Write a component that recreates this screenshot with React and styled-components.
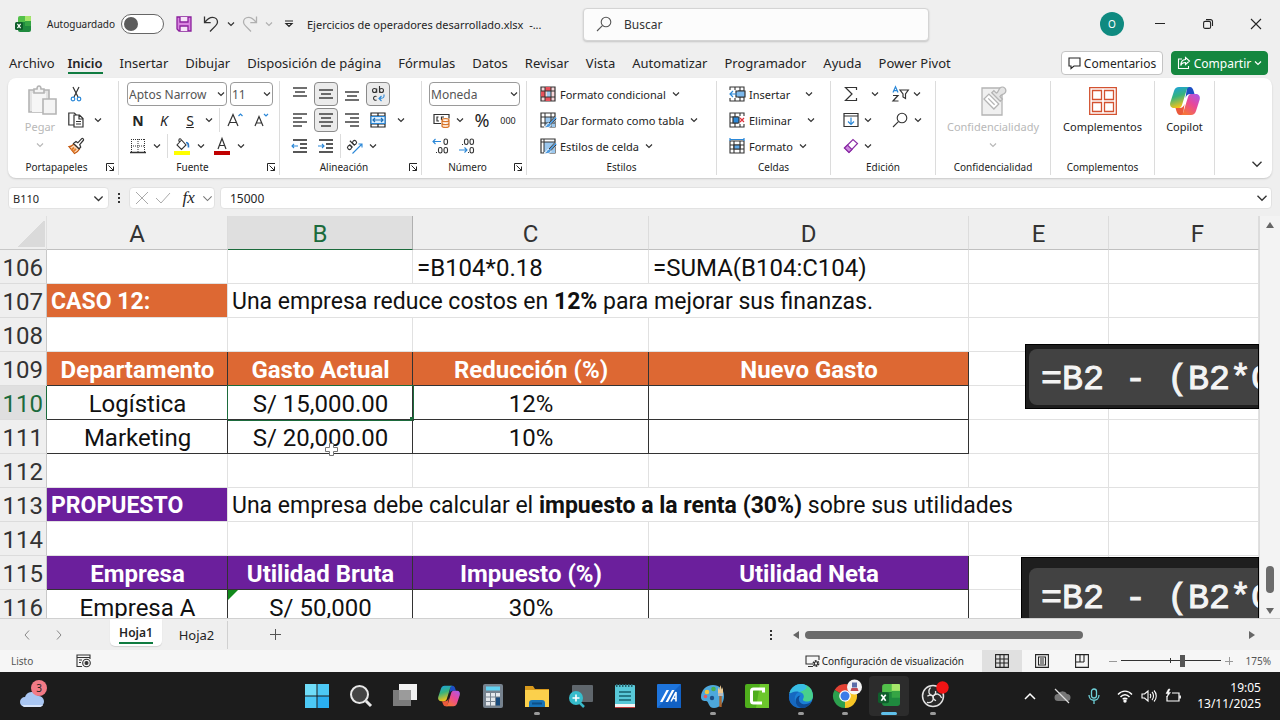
import React, { useState } from 'react';
import styled, { createGlobalStyle, css } from 'styled-components';

const ui = `'Noto Sans', 'Open Sans', sans-serif`;
const green = '#107c41';

const GlobalStyle = createGlobalStyle`
    * { box-sizing: border-box; }
    body {
        margin: 0;
        font-family: ${ui};
        font-size: 12px;
        color: #242424;
        background: #efefef;
    }
    button, input, select {
        font: inherit;
        color: inherit;
    }
    button {
        border: none;
        background: none;
        padding: 0;
    }
    svg {
        display: block;
        flex: none;
        overflow: visible;
    }
`

const Page = styled.div`
    display: flex;
    flex-direction: column;
    height: 100vh;
    overflow: hidden;
`

/* title bar */

const TitleBar = styled.header`
    display: flex;
    align-items: center;
    height: 48px;
    flex: none;
`

const QuickAccess = styled.div`
    display: flex;
    align-items: center;
    flex: 0 0 583px;
    padding-left: 15px;
    font-size: 11px;
`

const AutoSave = styled.label`
    display: flex;
    align-items: center;
    justify-content: space-between;
    width: 117px;
    margin: 0 9px 0 16px;
    font-size: 10px;
    white-space: nowrap;
`

const Toggle = styled.input`
    appearance: none;
    width: 43px;
    height: 20px;
    margin: 0;
    flex: none;
    padding: 2px;
    border: 1px solid #666;
    border-radius: 10px;
    background: #fff;
    &::before {
        content: '';
        display: block;
        width: 14px;
        height: 14px;
        border-radius: 50%;
        background: #5c5c5c;
    }
    &:checked::before {
        margin-left: auto;
    }
`

const FileName = styled.span`
    margin-left: 2px;
    white-space: pre;
`

const Search = styled.label`
    display: flex;
    align-items: center;
    gap: 12px;
    flex: 0 1 346px;
    height: 33px;
    padding: 0 12px;
    background: #fcfcfc;
    border: 1px solid #d4d4d4;
    border-radius: 4px;
    box-shadow: 0 1px 2px rgba(0, 0, 0, 0.18);
    input {
        flex: 1;
        min-width: 0;
        border: none;
        outline: none;
        background: none;
        font-size: 12px;
        padding: 0;
    }
    input::placeholder {
        color: #333;
    }
`

const WindowButtons = styled.div`
    display: flex;
    align-items: center;
    margin-left: auto;
`

const WindowButton = styled.button`
    display: flex;
    align-items: center;
    justify-content: center;
    width: 48px;
    height: 32px;
`

const Avatar = styled.button`
    width: 24px;
    height: 24px;
    margin-right: 12px;
    border-radius: 50%;
    background: #0f8a80;
    color: #fff;
    font-size: 10px;
`

/* ribbon */

const TabBar = styled.nav`
    display: flex;
    align-items: center;
    height: 30px;
    flex: none;
    padding: 0 12px 0 9px;
`

const TabList = styled.div`
    display: flex;
    gap: 17px;
    flex: 1;
`

const Tab = styled.button`
    height: 22px;
    padding-top: 2px;
    font-size: 13px;
    line-height: 18px;
    white-space: nowrap;
    border-bottom: 2px solid transparent;
    ${p => p.$first && css`
        margin-right: -4px;
    `}
    ${p => p.$active && css`
        font-weight: 600;
        border-bottom-color: ${green};
    `}
`

const TabAction = styled.button`
    display: flex;
    align-items: center;
    justify-content: center;
    gap: 3px;
    height: 24px;
    width: ${p => p.$width}px;
    margin-left: 8px;
    border-radius: 4px;
    font-size: 12px;
    border: 1px solid ${p => p.$primary ? '#15873f' : '#c4c4c4'};
    background: ${p => p.$primary ? '#15873f' : '#fff'};
    color: ${p => p.$primary ? '#fff' : '#242424'};
`

const Ribbon = styled.section`
    display: flex;
    flex: none;
    height: 100px;
    margin: 0 8px;
    padding: 3px 0;
    background: #fff;
    border-radius: 8px;
    box-shadow: 0 1px 2px rgba(0, 0, 0, 0.16);
`

const Group = styled.div`
    display: flex;
    flex-direction: column;
    flex: 0 0 ${p => p.$width}px;
    border-right: 1px solid #dcdcdc;
`

const GroupBody = styled.div`
    display: flex;
    height: 78px;
    padding-left: ${p => p.$pad || 0}px;
    justify-content: ${p => p.$center ? 'center' : 'flex-start'};
`

const GroupLabel = styled.div`
    display: flex;
    align-items: center;
    height: 16px;
    font-size: 10px;
    span {
        flex: 1;
        text-align: center;
    }
    button {
        margin-right: 3px;
    }
`

const Rows = styled.div`
    display: flex;
    flex-direction: column;
`

const Row = styled.div`
    display: flex;
    align-items: center;
    height: 26px;
    gap: ${p => p.$gap || 0}px;
`

const Tool = styled.button`
    display: flex;
    align-items: center;
    justify-content: center;
    width: ${p => p.$width || 24}px;
    height: 24px;
    flex: none;
    font-size: ${p => p.$size || 14}px;
    ${p => p.$on && css`
        background: #ebebeb;
        border: 1px solid #8a8a8a;
        border-radius: 4px;
    `}
`

const Divider = styled.span`
    width: 1px;
    height: 24px;
    margin: 0 ${p => p.$margin || 0}px;
    background: ${p => p.$clear ? 'transparent' : '#dcdcdc'};
`

const BigTool = styled.button`
    display: flex;
    flex-direction: column;
    align-items: center;
    width: ${p => p.$width}px;
    padding-top: 4px;
    white-space: nowrap;
    color: ${p => p.$disabled ? '#b8b8b8' : '#242424'};
    span {
        margin: 1px 0 5px;
        font-size: 11px;
        line-height: 18px;
    }
`

const TextTool = styled.button`
    display: flex;
    align-items: center;
    gap: 4px;
    height: 24px;
    font-size: 11px;
    white-space: nowrap;
    span {
        min-width: ${p => p.$textWidth || 0}px;
        text-align: left;
        margin-right: 2px;
    }
`

const Picker = styled.span`
    display: flex;
    align-items: center;
    width: ${p => p.$width}px;
    height: 24px;
    margin-right: 3px;
    padding-right: 1px;
    background: #fff;
    border: 1px solid #9a9a9a;
    border-radius: 4px;
    select {
        appearance: none;
        flex: 1;
        min-width: 0;
        border: none;
        outline: none;
        background: none;
        padding: 0 0 0 1px;
        font-size: 12px;
        color: #555;
    }
`

const Collapse = styled.button`
    align-self: flex-end;
    margin: 0 9px 5px auto;
`

/* formula bar */

const FormulaBar = styled.div`
    display: flex;
    align-items: center;
    flex: none;
    height: 22px;
    margin: 9px 8px 7px;
    font-size: 11px;
`

const NameBox = styled.label`
    display: flex;
    align-items: center;
    width: 101px;
    height: 22px;
    padding: 0 4px;
    background: #fff;
    border: 1px solid #e2e2e2;
    border-radius: 4px;
    input {
        flex: 1;
        min-width: 0;
        border: none;
        outline: none;
        padding: 0;
    }
`

const FormulaButtons = styled.div`
    display: flex;
    align-items: center;
    justify-content: space-between;
    width: 86px;
    height: 22px;
    padding: 0 1px 0 6px;
    margin-right: 5px;
    background: #fff;
    border: 1px solid #e2e2e2;
    border-radius: 4px;
`

const Fx = styled.button`
    font-family: 'Liberation Serif', serif;
    font-style: italic;
    font-size: 17px;
    line-height: 18px;
    padding-left: 4px;
`

const FormulaInput = styled.label`
    display: flex;
    align-items: center;
    flex: 1;
    height: 22px;
    padding: 0 3px 0 9px;
    background: #fff;
    border: 1px solid #e2e2e2;
    border-radius: 4px;
    font-size: 12px;
    input {
        flex: 1;
        border: none;
        outline: none;
        padding: 0;
    }
`

const Dots = styled.span`
    display: flex;
    flex-direction: column;
    align-items: center;
    gap: 2px;
    width: 20px;
    margin: ${p => p.$end ? '0 11px 0 auto' : 0};
    i {
        width: 2px;
        height: 2px;
        background: #333;
    }
`

/* sheet */

const SheetArea = styled.main`
    display: flex;
    flex: 1;
    min-height: 0;
    border-bottom: 1px solid #d0d0d0;
`

const Canvas = styled.div`
    position: relative;
    flex: 1;
    min-width: 0;
    overflow: hidden;
    background: #fff;
`

const Grid = styled.table`
    width: 100%;
    table-layout: fixed;
    border-collapse: separate;
    border-spacing: 0;
    font-family: Roboto, 'Liberation Sans', sans-serif;
    font-size: 24px;
    line-height: 30px;
    color: #111;
    td, th {
        height: 34px;
        padding: 2px 0 0;
        font-weight: 400;
        white-space: nowrap;
    }
`

const Corner = styled.td`
    background: linear-gradient(135deg, #efefef 50%, #dadada 50%) no-repeat 17px 5px / 28px 26px #efefef;
    border-right: 1px solid #e0e0e0;
    border-bottom: 1px solid #c8c8c8;
`

const ColHead = styled.th`
    background: ${p => p.$on ? '#dfdfdf' : '#efefef'};
    color: ${p => p.$on ? '#1c6b3c' : '#333'};
    border-right: 1px solid ${p => p.$on ? '#b0b0b0' : '#dcdcdc'};
    border-bottom: 1px solid ${p => p.$on ? '#1c6b3c' : '#c0c0c0'};
    && {
        padding-left: ${p => p.$shift || 0}px;
    }
`

const RowHead = styled.th`
    background: ${p => p.$on ? '#dfdfdf' : '#efefef'};
    color: ${p => p.$on ? '#1c6b3c' : '#333'};
    border-right: 1px solid ${p => p.$on ? '#1c6b3c' : '#c8c8c8'};
    border-bottom: 1px solid #dcdcdc;
    && {
        padding-right: 3px;
        text-align: right;
    }
`

const Cell = styled.td`
    position: relative;
    text-align: ${p => p.$center ? 'center' : 'left'};
    font-size: ${p => p.$caption ? 23 : 24}px;
    border-right: 1px solid ${p => p.$boxed ? '#333' : '#e1e1e1'};
    border-bottom: 1px solid ${p => p.$boxed ? '#333' : '#e1e1e1'};
    && {
        padding: 2px 3px 0 4px;
    }
    ${p => p.$fill && css`
        background: ${p.$fill};
        color: #fff;
        && {
            font-weight: 700;
        }
    `}
    ${p => p.$selected && css`
        outline: 1px solid #1c6b3c;
        &::after {
            content: '';
            position: absolute;
            right: -2px;
            bottom: -2px;
            width: 4px;
            height: 4px;
            background: #1c6b3c;
        }
    `}
    ${p => p.$flagged && css`
        &::before {
            content: '';
            position: absolute;
            left: 0;
            top: 0;
            border-top: 10px solid #128a1c;
            border-right: 10px solid transparent;
        }
    `}
`

const Snippet = styled.div`
    position: absolute;
    right: 0;
    top: ${p => p.$top}px;
    width: ${p => p.$width}px;
    height: 65px;
    padding: ${p => p.$pad};
    overflow: hidden;
    background: #1e1e1e;
    border: 1px solid #000;
    code {
        display: block;
        width: 400px;
        height: 56px;
        padding-left: 12px;
        border-radius: 8px;
        background: #424242;
        color: #f4f4f4;
        -webkit-text-stroke: 1px #f4f4f4;
        font-family: 'Liberation Mono', monospace;
        font-size: 35px;
        line-height: 62px;
        white-space: pre;
    }
`

const Pointer = styled.svg`
    position: absolute;
    left: 324px;
    top: 226px;
`

const VScroll = styled.div`
    display: flex;
    flex-direction: column;
    align-items: center;
    width: 21px;
    padding: 5px 0 3px;
    background: #f3f3f3;
    border-left: 1px solid #dcdcdc;
`

const VThumb = styled.span`
    width: 8px;
    height: 27px;
    margin: auto 0 14px;
    border-radius: 4px;
    background: #6b6b6b;
`

const SheetTabs = styled.nav`
    display: flex;
    align-items: center;
    flex: none;
    height: 31px;
    padding: 0 24px 0 11px;
    background: #efefef;
`

const SheetTab = styled.button`
    align-self: flex-start;
    width: ${p => p.$active ? 52 : 62}px;
    height: 28px;
    font-size: 13px;
    border-right: 1px solid #d0d0d0;
    span {
        padding-bottom: 1px;
    }
    ${p => p.$active ? css`
        margin: 0 4px 0 35px;
        height: 27px;
        background: #fff;
        border-right: none;
        border-radius: 0 0 5px 5px;
        font-weight: 600;
        font-size: 12px;
        box-shadow: 0 1px 1px rgba(0, 0, 0, 0.12);
        span {
            border-bottom: 2px solid ${green};
        }
    ` : css`
        margin-top: 2px;
    `}
`

const HScroll = styled.div`
    display: flex;
    align-items: center;
    width: 464px;
`

const HThumb = styled.span`
    width: 278px;
    height: 8px;
    margin: 0 auto 0 5px;
    border-radius: 4px;
    background: #6b6b6b;
`

/* status bar */

const StatusBar = styled.footer`
    display: flex;
    align-items: center;
    flex: none;
    height: 22px;
    padding: 0 9px 0 11px;
    font-size: 10px;
    background: #f6f6f6;
`

const Listo = styled.span`
    width: 65px;
    color: #555;
`

const DisplaySettings = styled.button`
    display: flex;
    align-items: center;
    gap: 2px;
    margin: 0 18px 0 auto;
`

const ViewButton = styled.button`
    display: flex;
    align-items: center;
    justify-content: center;
    width: 40px;
    height: 22px;
    background: ${p => p.$active ? '#e0e0e0' : 'none'};
`

const Zoom = styled.label`
    display: flex;
    align-items: center;
    gap: 4px;
    margin-left: 7px;
    color: #999;
    input {
        appearance: none;
        width: 100px;
        height: 12px;
        margin: 0;
        background:
            linear-gradient(#333, #333) no-repeat 49px 3px / 1px 5px,
            linear-gradient(#333, #333) no-repeat 0 5px / 100% 1px;
    }
    input::-webkit-slider-thumb {
        appearance: none;
        width: 5px;
        height: 12px;
        background: #555;
    }
`

const ZoomValue = styled.span`
    width: 38px;
    text-align: right;
    color: #555;
`

/* taskbar */

const Taskbar = styled.footer`
    display: flex;
    align-items: center;
    flex: none;
    height: 48px;
    padding: 0 19px 0 18px;
    background: #1c1c1c;
    color: #fff;
`

const Apps = styled.div`
    display: flex;
    flex: 1;
    gap: 4px;
    margin-left: 249px;
`

const AppButton = styled.button`
    display: flex;
    flex-direction: column;
    align-items: center;
    justify-content: space-between;
    width: 40px;
    height: 40px;
    padding: 8px 0 1px;
    border-radius: 4px;
    background: ${p => p.$active ? '#2c2c2c' : 'none'};
    i {
        width: ${p => p.$active ? 16 : 6}px;
        height: 3px;
        border-radius: 2px;
        background: ${p => p.$active ? '#5fc0ea' : p.$running ? '#9a9a9a' : 'transparent'};
    }
`

const Tray = styled.div`
    display: flex;
    align-items: center;
    button {
        display: flex;
        justify-content: center;
        width: 24px;
    }
    button:nth-child(-n + 3) {
        width: 32px;
    }
    button:nth-child(3) {
        margin-right: 3px;
    }
`

const Clock = styled.time`
    width: 76px;
    text-align: right;
    font-size: 12px;
    line-height: 16px;
`

const Svg = ({ w = 16, h = w, box, children, ...rest }) => (
    <svg width={w} height={h} viewBox={box || `0 0 ${w} ${h}`} fill="none" stroke="currentColor" aria-hidden="true" {...rest}>
        {children}
    </svg>
)

const Chevron = ({ size = 8, color = '#333', width = 1.2 }) => (
    <Svg w={size} box="0 0 8 8" stroke={color} strokeWidth={width}><path d="M1 2.5 4 5.5 7 2.5" /></Svg>
)

const Drop = ({ width = 16 }) => <Tool $width={width} aria-label="Más opciones"><Chevron /></Tool>

const Launcher = () => (
    <button aria-label="Abrir cuadro de diálogo">
        <Svg w={10} strokeWidth="1"><path d="M1.5 9V1.5H9M3.5 3.5l5 5M8.5 4.5v4h-4" /></Svg>
    </button>
)

const ExcelIcon = ({ size = 16 }) => (
    <Svg w={size} box="0 0 16 16" stroke="none">
        <path d="M5 0h10a1 1 0 0 1 1 1v5H3V2a2 2 0 0 1 2-2z" fill="#52c04a" />
        <path d="M10 0h5a1 1 0 0 1 1 1v4h-6z" fill="#a6e66a" />
        <path d="M3 6h13v8a2 2 0 0 1-2 2H5a2 2 0 0 1-2-2z" fill="#1f8a3e" />
        <path d="M10 5h6v5h-6z" fill="#35a544" />
        <rect y="6" width="8" height="8" rx="1.5" fill="#0f5f2c" />
        <path d="M2.4 7.8 5.6 12.2M5.6 7.8 2.4 12.2" stroke="#fff" strokeWidth="1.2" />
    </Svg>
)

const SaveIcon = () => (
    <Svg w={16} stroke="#8a1f9c" strokeWidth="1.3">
        <path d="M1 1h14v14H3l-2-2z" fill="#d884e0" />
        <path d="M4 1v5h8V1M4 15v-5h8v5" fill="#f6e4f8" />
    </Svg>
)

const UndoIcon = ({ flip, color }) => (
    <Svg w={16} h={18} stroke={color} strokeWidth="1.3">
        <path
            transform={flip ? 'matrix(-1 0 0 1 16 0)' : undefined}
            d="M1.500 1.500v6.200h6.200M1.700 7.500C4.500 3.800 6.700 2.300 9.500 2.300c3 0 5 2 5 4.600 0 1.800-1 3-2 4L7 16.500"
        />
    </Svg>
)

const Lens = ({ size = 16, color = '#333' }) => (
    <Svg w={size} box="0 0 16 16" stroke={color} strokeWidth="1.1"><circle cx="10" cy="6" r="4.8" /><path d="M6.4 9.6 1 15" /></Svg>
)

const Lines = ({ rows }) => (
    <Svg w={16} stroke="#222" strokeWidth="1.3">
        {rows.map(([x, y, len]) => <path key={y} d={`M${x} ${y}h${len}`} />)}
    </Svg>
)

const PasteIcon = () => (
    <Svg w={30} h={32} stroke="#b4b4b4" strokeWidth="1.6">
        <path d="M4 5h20v22H4z" fill="#e4e4e4" />
        <path d="M7 8h14v19H7z" fill="#f6f6f6" stroke="none" />
        <path d="M9 8V4h3c0-4 4-4 4 0h3v4z" fill="#f4f4f4" />
        <path d="M18 14h13v15H18z" fill="#f4f4f4" />
    </Svg>
)

const CutIcon = () => (
    <Svg w={12} h={16} stroke="#333" strokeWidth="1.2">
        <path d="M3 1l5 10M9 1 4 11" />
        <circle cx="3" cy="13" r="1.8" stroke="#2b88d8" /><circle cx="9" cy="13" r="1.8" stroke="#2b88d8" />
    </Svg>
)

const CopyIcon = () => (
    <Svg w={16} stroke="#333" strokeWidth="1.2">
        <path d="M6 13H.8V1h5.500l2 2" /><path d="M6 3h5.500L15 6.500V15H6zM11 3v4h4M8 9.500h5M8 12h5" />
    </Svg>
)

const BrushIcon = () => (
    <Svg w={16} strokeWidth="1.2">
        <path d="M1 8.500c2 0 3.500-1 5-2.500l5.500 5c-1 2-3 3.500-5 4.500z" fill="#fbd9b8" stroke="#c55a11" />
        <path d="M3.500 12 6 9.500M5 13.800l3-3" stroke="#e07a28" strokeWidth="1.800" />
        <path d="M5.500 5.500 8 3.500l1.800 1.300 3.700-4a1.200 1.200 0 0 1 1.700 1.700L11.700 6.500l1 2.500-1.700 1.800z" stroke="#333" fill="#fff" />
    </Svg>
)

const BordersIcon = () => (
    <Svg w={16} stroke="#333">
        <path d="M1 1.500h14M1 8h14M1.500 1v13M8 1v13M14.500 1v13" strokeDasharray="1 1" /><path d="M0 14.500h16" strokeWidth="1.500" />
    </Svg>
)

const FillIcon = () => (
    <Svg w={18} h={18} stroke="#333" strokeWidth="1.1">
        <path d="M8.500 3 4 8l4.500 4.500L13 8zM8.500 3c-2-3-3.500 0-2 2.300" /><path d="M13 5.500c2.500 0 2.500 2 2.500 5" stroke="#2b78c8" strokeWidth="1.600" />
        <path d="M1 16h16" stroke="#ffff00" strokeWidth="4" />
    </Svg>
)

const FontColorIcon = () => (
    <Svg w={16} h={18} stroke="#333" strokeWidth="1.200"><path d="M4 12 8 1.500l4 10.500M5.300 8.500h5.400" /><path d="M0 16h16" stroke="#c00000" strokeWidth="4" /></Svg>
)

const GrowFont = ({ down }) => (
    <Svg w={16} h={16} stroke="#333" strokeWidth="1.200">
        {down ? <path d="M1 14 5 4.500 9 14M2.400 11h5.200" /> : <path d="M1 14 6 2.500 11 14M2.800 10.500h6.400" />}
        <path d={down ? 'M10 2l2 2 2-2' : 'M11.500 4l2-2 2 2'} stroke="#2b88d8" />
    </Svg>
)

const WrapIcon = () => (
    <Svg w={16} h={18} stroke="#333" strokeWidth="1.1">
        <circle cx="4.500" cy="5.500" r="2" /><path d="M6.700 3.500v4.300M9.500 1v6.800" /><circle cx="11.500" cy="5.500" r="2" />
        <path d="M6.500 11.500a2 2 0 1 0 0 3.500" /><path d="M14 9.500v1.500c0 2-1 2.500-5 2.500m2.500-2.500L9 13.500 11.500 16" stroke="#2b88d8" />
    </Svg>
)

const MergeIcon = () => (
    <Svg w={16} stroke="#222" strokeWidth="1.2">
        <path d="M1 1h14v14H1zM1 4h14M1 12h14M8 1v3M8 12v3" /><path d="M1 4.500h14v7H1z" fill="#dcefff" stroke="#2b88d8" />
        <path d="M3 8h10M5 6 3 8l2 2M11 6l2 2-2 2" stroke="#1f6fb5" />
    </Svg>
)

const IndentIcon = ({ right }) => (
    <Svg w={16} stroke="#222" strokeWidth="1.3">
        <path d="M1 2h14M8 6h7M8 10h7M1 14h14" />
        <path d={right ? 'M0 8h6M4 6l2 2-2 2' : 'M6 8H0M2 6 0 8l2 2'} stroke="#2b88d8" strokeWidth="1.1" />
    </Svg>
)

const OrientIcon = () => (
    <Svg w={18} h={16} stroke="#333" strokeWidth="1.1">
        <g transform="rotate(-45 6 7)">
            <circle cx="2.500" cy="7" r="2" /><path d="M4.700 4.800V9.200M7.500 2.500v6.700" /><circle cx="9.600" cy="7" r="2" />
        </g>
        <path d="M6.500 15.500 16 6M12.500 6H16v3.500" stroke="#2b88d8" />
    </Svg>
)

const CurrencyIcon = () => (
    <Svg w={17} h={16} stroke="#333" strokeWidth="1.2">
        <path d="M8 11.500H1v-9h15v4" /><path d="M5.500 5H4v4h2M11 5H8.500v3" />
        <path d="M9 8c0-2 7-2 7 0v6c0 2-7 2-7 0zM9 8c0 2 7 2 7 0M9 11c0 2 7 2 7 0" stroke="#d9762b" fill="#fbe0c8" />
    </Svg>
)

const DecimalIcon = ({ more }) => (
    <Svg w={18} h={18} stroke="#333" strokeWidth="1.100">
        <rect x={more ? 6.500 : 12} y="2" width="3.500" height="5.500" rx="1.700" />
        {more && <rect x="12" y="2" width="3.500" height="5.500" rx="1.700" />}
        <rect x="12" y="10.500" width="3.500" height="5.500" rx="1.700" />
        {!more && <rect x="6.500" y="10.500" width="3.500" height="5.500" rx="1.700" />}
        <path d={more ? 'M4 7.500h1M10 15.500h1' : 'M4 15.500h1'} />
        <path d={more ? 'M1 13h8M6.500 10.500 9 13l-2.500 2.500' : 'M9 4.500H1M3.500 2 1 4.500 3.500 7'} stroke="#2b88d8" />
    </Svg>
)

const TableIcon = ({ kind }) => (
    <Svg w={16} strokeWidth="1.2" stroke="#333">
        <path d="M1 1h14v14H1z" fill={kind === 'cond' ? '#f9d7da' : '#fff'} />
        {kind === 'cond' && <path d="M5 1h6v4H5zM1 5h4v6H1zM5 11h6v4H5z" fill="#e8505b" stroke="none" />}
        {kind === 'cond' && <path d="M7 5h4v6H7z" fill="#9cc8ee" stroke="none" />}
        {kind === 'table' && <path d="M5 5h10v10H5z" fill="#9cc8ee" stroke="none" />}
        {kind === 'style' && <path d="M4 4h11v11H4z" fill="#9cc8ee" stroke="none" />}
        <path d={kind === 'style' ? 'M1 4h14M4 1v14' : 'M1 5h14M1 11h14M5 1v14M11 1v14'} strokeWidth="1" />
        {kind !== 'cond' && <path d="M16 4 9 11c-2.500 0-2 3.500-5 4 4 1.500 7 0 7-2.500l6-6z" fill="#4f9be0" stroke="#fff" strokeWidth="1" />}
        {kind !== 'cond' && <path d="M15.500 4 9 11M16 7l-5 5.500" strokeWidth="1" />}
    </Svg>
)

const CellsIcon = ({ kind }) => (
    <Svg w={16} strokeWidth="1.2" stroke="#333">
        <path d={kind === 'format' ? 'M1 3h14v12H1zM1 7h14M1 11h14M5 3v12M11 3v12' : 'M1 1h14v14H1zM1 5h14M1 11h14M6 1v4M11 1v4M6 11v4M11 11v4'} strokeWidth="1.100" />
        {kind === 'insert' && <><path d="M0 4h9v8H0z" fill="#fff" stroke="none" /><path d="M7 5h9v6H7z" fill="#7db9ec" /><path d="M8 8H1M4 5 1 8l3 3" stroke="#2b88d8" /></>}
        {kind === 'delete' && <><path d="M9 4h7v8H9z" fill="#fff" stroke="none" /><path d="M4 5h6v6H4z" fill="#2b88d8" /><path d="M11 6l4 4M15 6l-4 4" stroke="#e0303a" /></>}
        {kind === 'format' && <><path d="M5 7h6v4H5z" fill="#5fa8e8" /><path d="M1 0v3M15 0v3M1 1.500h14" stroke="#2b88d8" /></>}
    </Svg>
)

const SumIcon = () => <Svg w={14} h={16} stroke="#333" strokeWidth="1.2"><path d="M12.500 4V1.500H1.500L8 8l-6.500 6.500h11V12" /></Svg>

const FillDown = () => (
    <Svg w={16} stroke="#333" strokeWidth="1.2"><path d="M1 1.500h14v13H1zM1 4h14" /><path d="M8 5.500v7M5 9.500l3 3 3-3" stroke="#2b88d8" /></Svg>
)

const EraserIcon = () => (
    <Svg w={16} stroke="#8a2da5" strokeWidth="1.2"><path d="M1.500 10 10 1.500l4.500 4L6 14.500z" fill="#fff" /><path d="M1.500 10l3-3L9 11.500l-3 3z" fill="#d08ae0" /></Svg>
)

const SortIcon = () => (
    <Svg w={17} h={16} stroke="#333" strokeWidth="1.2">
        <path d="M1 6.500 3.500.8 6 6.500M2 4.700h3" stroke="#2b88d8" /><path d="M1 9.500h5L1 15h5.500" /><path d="M8 4h8.300L13.500 8v4.500L11 11V8z" />
    </Svg>
)

const SensitivityIcon = () => (
    <Svg w={30} h={32} stroke="#b4b4b4" strokeWidth="1.3">
        <path d="M4 3h20v27H4z" fill="#f0f0f0" />
        <g transform="rotate(45 18 12)">
            <path d="M11 15h14v7H11z" fill="#fff" /><path d="M13.500 18.500h9" />
            <path d="M12 12h12V9h-3.500c-1-2 1-4 1-6a3.500 3.500 0 0 0-7 0c0 2 2 4 1 6H12z" fill="#e4e4e4" />
        </g>
    </Svg>
)

const AddinsIcon = () => (
    <Svg w={28} h={32} stroke="#d35230" strokeWidth="1.3">
        <path d="M.7 2.700h26.600v26.600H.7z" /><path d="M3.500 5.500h9v9h-9zM15.500 5.500h9v9h-9zM3.500 17.500h9v9h-9zM15.500 17.500h9v9h-9z" />
    </Svg>
)

const CopilotIcon = ({ id, size, h = size }) => (
    <Svg w={size} h={h} box="0 0 30 28" stroke="none">
        <defs>
            <linearGradient id={`${id}a`} x1="0" y1="0" x2="0.300" y2="1"><stop stopColor="#1aa0e8" /><stop offset=".5" stopColor="#36b37e" /><stop offset="1" stopColor="#f2c21a" /></linearGradient>
            <linearGradient id={`${id}b`} x1="1" y1="0" x2="0.300" y2="1"><stop stopColor="#a55bf0" /><stop offset=".5" stopColor="#e8489a" /><stop offset="1" stopColor="#f7743a" /></linearGradient>
        </defs>
        <path d="M17 0h3c2 0 3 2 3.600 4l.9 3h-4c-3 0-4 1.500-5 4z" fill="#1c4fc4" />
        <path d="M13 28h-3c-2 0-3-2-3.600-4l-.9-3h4c3 0 4-1.500 5-4z" fill="#ea5a3c" />
        <path d="M9 0h10c-2 1-2.500 3-3 5l-4 13c-.8 2.500-2 3-4 3H4c-3 0-4.500-2.500-3.700-5.500L4 4c.8-2.500 2.500-4 5-4z" fill={`url(#${id}a)`} />
        <path d="M21 28H11c2-1 2.500-3 3-5l4-13c.8-2.500 2-3 4-3h4c3 0 4.500 2.500 3.700 5.500L26 24c-.8 2.500-2.500 4-5 4z" fill={`url(#${id}b)`} />
    </Svg>
)

const ShareIcon = () => <Svg w={14} h={14} stroke="#fff" strokeWidth="1.100"><path d="M5 3H1.500v9.500h10V10M8.500 1.500l4 3.500-4 3.500v-2C6 6.500 4.500 7.500 3.800 9.500c0-3.500 1.700-5.800 4.700-6z" /></Svg>

const CommentIcon = () => <Svg w={13} h={14} strokeWidth="1.100"><path d="M1 2h11v8H6l-3 2.500V10H1z" /></Svg>

const MacroIcon = () => (
    <Svg w={16} h={14} stroke="#333" strokeWidth="1.100"><path d="M6 12.500H1V1h13v4M1 3.500h13M3 6h3M3 8.500h2" /><circle cx="10.500" cy="9" r="3.800" /><circle cx="10.500" cy="9" r="1.500" fill="#333" /></Svg>
)

const DisplayIcon = () => (
    <Svg w={15} h={14} stroke="#333" strokeWidth="1.100"><path d="M8 10H1V2h13v4M3 12.500h5" /><circle cx="11" cy="9.500" r="2.500" strokeWidth="2" strokeDasharray="1.600 1" /><circle cx="11" cy="9.500" r="1.700" /></Svg>
)

const Arrow = ({ d }) => <Svg w={8} stroke="none"><path d={d} fill="#666" /></Svg>

const taskIcons = {
    windows: <Svg w={24} stroke="none"><path d="M0 0h11.500v11.500H0z" fill="#6fdcf8" /><path d="M12.500 0H24v11.500H12.500zM0 12.500h11.500V24H0z" fill="#4cc8f5" /><path d="M12.500 12.500H24V24H12.500z" fill="#2aaef0" /></Svg>,
    search: <Svg w={24} stroke="#e8e8e8"><circle cx="10.500" cy="10.500" r="8.500" fill="#444" strokeWidth="2" /><path d="M17 17l5 5" strokeWidth="3" /></Svg>,
    tasks: <Svg w={24} stroke="none"><path d="M6 0h18v16H6z" fill="#f2f2f2" /><path d="M0 6h18v16H0z" fill="#8c8c8c" fillOpacity=".85" /></Svg>,
    copilot: <CopilotIcon id="tb" size={22} h={24} />,
    calc: (
        <Svg w={24} stroke="none">
            <rect x="2" width="20" height="24" rx="2" fill="#76828e" /><path d="M5 2.500h14v4H5z" fill="#62d2f2" />
            <path d="M5 9h4v3.500H5zM10 9h4v3.500h-4zM15 9h4v3.500h-4zM5 13.500h4V17H5zM10 13.500h4V17h-4zM5 18h4v3.500H5zM10 18h4v3.500h-4z" fill="#e4e8ec" /><path d="M15 13.500h4v8h-4z" fill="#174a7c" />
        </Svg>
    ),
    folder: <Svg w={24} stroke="none"><path d="M0 2h8l2 3h14v5H0z" fill="#d99a1c" /><path d="M0 6h24v17H0z" fill="#fbd04c" /><path d="M4 23v-4a3 3 0 0 1 3-3h10a3 3 0 0 1 3 3v4z" fill="#1773b8" /><path d="M7 19.500h10" stroke="#0d4f86" strokeWidth="2" /></Svg>,
    magnify: <Svg w={24} stroke="none"><rect x="3" y="1" width="21" height="17" rx="1" fill="#5f666c" /><path d="M11 19l4 4" stroke="#3ab8c8" strokeWidth="2.500" /><circle cx="7" cy="14" r="7" fill="#36bccb" /><path d="M7 10.500v7M3.500 14h7" stroke="#fff" strokeWidth="1.600" /></Svg>,
    notes: <Svg w={24} stroke="none"><rect x="2" y="1" width="20" height="22" rx="1" fill="#58c8d8" /><path d="M2 21.500h20" stroke="#f4f6f6" strokeWidth="3" /><path d="M2 23.500h20" stroke="#c23c3c" strokeWidth="1" /><path d="M6 8h12M6 12h12M6 16h12" stroke="#14606e" strokeWidth="1.300" /><path d="M3 1.500h18" stroke="#26616c" strokeWidth="3" strokeDasharray="1.500 1.500" /></Svg>,
    monitor: <Svg w={24} stroke="none"><rect width="24" height="24" rx="1" fill="#1d74dc" /><path d="M0 24 24 0v24z" fill="#1261c4" /><path d="M3 18 9.500 6H12L5.500 18zM8.500 18 15 6h2.500L11 18z" fill="#fff" /><path d="M14 17.500 19 8v9.500M16.500 14.500H19" stroke="#fff" strokeWidth="1.600" /></Svg>,
    paint: (
        <Svg w={24} stroke="none">
            <path d="M12 1C5 1 0 6.500 0 13c0 4 3 4 5 4 3 0 2 7 8 7s10-5 10-12S18 1 12 1z" fill="#4da8dc" />
            <circle cx="6" cy="8" r="2.300" fill="#f5c63c" /><circle cx="12.500" cy="5" r="2.300" fill="#4caf50" /><circle cx="4.500" cy="12.500" r="1.800" fill="#e85a5a" /><circle cx="11" cy="14" r="2.200" fill="#1c4f86" />
            <path d="M19.500 8v15" stroke="#a8622c" strokeWidth="2.400" /><path d="M17 9h5V3l-1.200 3L19.500 1l-1.300 5L17 3z" fill="#ecc890" /><path d="M17 9h5v3h-5z" fill="#b8bcc0" />
        </Svg>
    ),
    camtasia: <Svg w={24} stroke="none"><rect width="24" height="24" rx="2" fill="#4fae1c" /><path d="M15 0h9v24H11z" fill="#6cc62c" /><path d="M18.500 8.500V5H8.500a2 2 0 0 0-2 2v10a2 2 0 0 0 2 2H17" stroke="#fff" strokeWidth="3" /></Svg>,
    edge: (
        <Svg w={24} stroke="none">
            <circle cx="12" cy="12" r="12" fill="#1b7fd6" />
            <path d="M.5 9C3 2 10-1 16 .7 22 2.500 24 8 24 12c0 4-3 5.500-6 5.500-3.500 0-4.500-1.500-4-2.500 2-2.500.5-7-4.500-7C5 8 2 9 .5 9z" fill="#48d08c" />
            <path d="M.5 9C3 2 9-1 15 .5 19 1.500 18 5 15 6c-2 1.500-4 2-5.500 2C5 8 2 9 .5 9z" fill="#38bce4" />
            <path d="M10 8c-6 2-6 13 3 15.900C5 25-1 19 0 11.500 2 7.500 7 7 10 8z" fill="#1668c0" />
            <path d="M11.500 11.500c-3 2-2 8 3 8.700 3 .3 6-1 7.800-2.400C20 23 15 24.500 12 23.900 5 22 5 12 11.500 11.500z" fill="#0e4a94" />
        </Svg>
    ),
    chrome: (
        <Svg w={28} h={24} box="-2 0 28 24" stroke="none">
            <path d="M12 12 1.600 6A12 12 0 0 1 22.400 6z" fill="#e34133" /><path d="M12 12 1.600 6A12 12 0 0 0 12 24l5-9z" fill="#2da04e" /><path d="M12 12l10.400-6A12 12 0 0 1 12 24z" fill="#f7c526" />
            <circle cx="12" cy="12" r="5.800" fill="#fff" /><circle cx="12" cy="12" r="4.500" fill="#3c7be8" /><circle cx="21.500" cy="3" r="7.500" fill="#f4f4f4" /><path d="M18.500 4h6l1 3h-8z" fill="#c04a54" /><path d="M19-1.500h5v5h-5z" fill="#5c6ea8" />
        </Svg>
    ),
    excel: <ExcelIcon size={22} />,
    obs: (
        <Svg w={28} h={24} box="-1 0 28 24" stroke="#e4e4e4" strokeWidth="1.500">
            <circle cx="13" cy="12" r="10.500" fill="#2a2a2a" />
            {[0, 120, 240].map(a => <path key={a} transform={`rotate(${a} 13 12)`} d="M13 12c-4.500-1-5.500-5-2.500-8.500M13 12c2-1 3-3 2.500-5" strokeWidth="1.300" />)}
            <circle cx="22.500" cy="3.500" r="6.200" fill="#f01414" stroke="none" />
        </Svg>
    ),
}

const tabs = ['Archivo', 'Inicio', 'Insertar', 'Dibujar', 'Disposición de página', 'Fórmulas', 'Datos', 'Revisar', 'Vista', 'Automatizar', 'Programador', 'Ayuda', 'Power Pivot'];

const taskApps = [
    ['windows', 'Inicio'], ['search', 'Buscar'], ['tasks', 'Vista de tareas'], ['copilot', 'Copilot'], ['calc', 'Calculadora'],
    ['folder', 'Explorador', true], ['magnify', 'Lupa'], ['notes', 'Bloc de notas'], ['monitor', 'MyASUS'], ['paint', 'Paint', true],
    ['camtasia', 'Camtasia'], ['edge', 'Edge', true], ['chrome', 'Chrome', true], ['excel', 'Excel', true], ['obs', 'OBS', true],
];

const orange = '#dd6833';
const purple = '#6b1f9c';
const blank = [{}, {}, {}, {}, {}, {}];

const caption = (fill, title, span, text) => [{ text: title, fill, caption: true }, { span, text, caption: true }];
const headers = (fill, names) => [...names.map(text => ({ text, fill, center: true, boxed: true })), {}, {}];
const values = (a, b, c, extra) => [
    { text: a, center: true, boxed: true },
    { text: b, center: true, boxed: true, ...extra },
    { text: c, center: true, boxed: true },
    { boxed: true }, {}, {},
];

const rows = [
    [106, [{}, {}, { text: '=B104*0.18' }, { text: '=SUMA(B104:C104)' }, {}, {}]],
    [107, [...caption(orange, 'CASO 12:', 3, <>Una empresa reduce costos en <b>12%</b> para mejorar sus finanzas.</>), {}, {}]],
    [108, blank],
    [109, headers(orange, ['Departamento', 'Gasto Actual', 'Reducción (%)', 'Nuevo Gasto'])],
    [110, values('Logística', 'S/ 15,000.00', '12%', { selected: true })],
    [111, values('Marketing', 'S/ 20,000.00', '10%')],
    [112, blank],
    [113, [...caption(purple, 'PROPUESTO', 4, <>Una empresa debe calcular el <b>impuesto a la renta (30%)</b> sobre sus utilidades</>), {}]],
    [114, blank],
    [115, headers(purple, ['Empresa', 'Utilidad Bruta', 'Impuesto (%)', 'Utilidad Neta'])],
    [116, values('Empresa A', 'S/ 50,000', '30%', { flagged: true })],
];

const RibbonGroup = ({ label, width, pad, center, launcher, children }) => (
    <Group $width={width}>
        <GroupBody $pad={pad} $center={center}>{children}</GroupBody>
        <GroupLabel>
            <span>{label}</span>
            {launcher && <Launcher />}
        </GroupLabel>
    </Group>
)

const Select = ({ label, value, width }) => (
    <Picker $width={width}>
        <select aria-label={label} defaultValue={value}><option>{value}</option></select>
        <Chevron />
    </Picker>
)

const MenuTool = ({ icon, text, textWidth }) => (
    <Row>
        <TextTool $textWidth={textWidth}>{icon}<span>{text}</span><Chevron /></TextTool>
    </Row>
)

const HomeRibbon = () => (
    <Ribbon>
        <RibbonGroup label="Portapapeles" width={111} pad={4} launcher>
            <BigTool $width={56} $disabled><PasteIcon /><span>Pegar</span><Chevron color="#b8b8b8" /></BigTool>
            <Rows>
                <Row><Tool $width={16} aria-label="Cortar"><CutIcon /></Tool></Row>
                <Row><Tool $width={16} aria-label="Copiar"><CopyIcon /></Tool><Drop width={28} /></Row>
                <Row><Tool $width={16} aria-label="Copiar formato"><BrushIcon /></Tool></Row>
            </Rows>
        </RibbonGroup>
        <RibbonGroup label="Fuente" width={161} pad={8} launcher>
            <Rows>
                <Row><Select label="Fuente" value="Aptos Narrow" width={100} /><Select label="Tamaño" value="11" width={43} /></Row>
                <Row>
                    <Tool $width={22}><b>N</b></Tool><Tool $width={30}><i>K</i></Tool><Tool $width={22}><u>S</u></Tool><Drop />
                    <Divider $margin={2} />
                    <Tool $width={26} aria-label="Aumentar"><GrowFont /></Tool><Tool $width={28} aria-label="Disminuir"><GrowFont down /></Tool>
                </Row>
                <Row>
                    <Tool $width={22} aria-label="Bordes"><BordersIcon /></Tool><Drop />
                    <Divider $margin={2} />
                    <Tool $width={24} aria-label="Color de relleno"><FillIcon /></Tool><Drop width={14} />
                    <Tool $width={28} aria-label="Color de fuente"><FontColorIcon /></Tool><Drop width={10} />
                </Row>
            </Rows>
        </RibbonGroup>
        <RibbonGroup label="Alineación" width={142} pad={8} launcher>
            <Rows>
                <Row $gap={2}>
                    <Tool aria-label="Alinear arriba"><Lines rows={[[1, 2, 14], [3, 6, 10], [1, 10, 14]]} /></Tool>
                    <Tool $on aria-label="Alinear en medio"><Lines rows={[[1, 4, 14], [3, 8, 10], [1, 12, 14]]} /></Tool>
                    <Tool aria-label="Alinear abajo"><Lines rows={[[1, 6, 14], [3, 10, 10], [1, 14, 14]]} /></Tool>
                    <Tool $on aria-label="Ajustar texto"><WrapIcon /></Tool>
                </Row>
                <Row $gap={2}>
                    <Tool aria-label="Izquierda"><Lines rows={[[1, 2, 14], [1, 6, 9], [1, 10, 14], [1, 14, 9]]} /></Tool>
                    <Tool $on aria-label="Centrar"><Lines rows={[[1, 2, 14], [3, 6, 10], [1, 10, 14], [3, 14, 10]]} /></Tool>
                    <Tool aria-label="Derecha"><Lines rows={[[1, 2, 14], [6, 6, 9], [1, 10, 14], [6, 14, 9]]} /></Tool>
                    <Tool aria-label="Combinar"><MergeIcon /></Tool><Drop width={18} />
                </Row>
                <Row $gap={2}>
                    <Tool aria-label="Disminuir sangría"><IndentIcon /></Tool><Tool aria-label="Aumentar sangría"><IndentIcon right /></Tool>
                    <Divider />
                    <Tool aria-label="Orientación"><OrientIcon /></Tool><Drop width={8} />
                </Row>
            </Rows>
        </RibbonGroup>
        <RibbonGroup label="Número" width={105} pad={7} launcher>
            <Rows>
                <Row><Select label="Formato de número" value="Moneda" width={91} /></Row>
                <Row>
                    <Tool aria-label="Moneda"><CurrencyIcon /></Tool><Drop width={14} />
                    <Tool $width={30} $size={18}>%</Tool><Tool $width={22} $size={9}>000</Tool>
                </Row>
                <Row>
                    <Tool aria-label="Más decimales"><DecimalIcon /></Tool><Tool $width={28} aria-label="Menos decimales"><DecimalIcon more /></Tool>
                </Row>
            </Rows>
        </RibbonGroup>
        <RibbonGroup label="Estilos" width={190} pad={13}>
            <Rows>
                <MenuTool icon={<TableIcon kind="cond" />} text="Formato condicional" />
                <MenuTool icon={<TableIcon kind="table" />} text="Dar formato como tabla" />
                <MenuTool icon={<TableIcon kind="style" />} text="Estilos de celda" />
            </Rows>
        </RibbonGroup>
        <RibbonGroup label="Celdas" width={114} pad={12}>
            <Rows>
                <MenuTool icon={<CellsIcon kind="insert" />} text="Insertar" textWidth={50} />
                <MenuTool icon={<CellsIcon kind="delete" />} text="Eliminar" textWidth={52} />
                <MenuTool icon={<CellsIcon kind="format" />} text="Formato" />
            </Rows>
        </RibbonGroup>
        <RibbonGroup label="Edición" width={105} pad={8}>
            <Rows>
                <Row><Tool aria-label="Autosuma"><SumIcon /></Tool><Drop width={24} /><Tool $width={26} aria-label="Ordenar"><SortIcon /></Tool><Drop width={8} /></Row>
                <Row><Tool aria-label="Rellenar"><FillDown /></Tool><Drop width={10} /><Divider $margin={6} $clear /><Tool $width={28} aria-label="Buscar"><Lens /></Tool><Drop width={8} /></Row>
                <Row><Tool aria-label="Borrar"><EraserIcon /></Tool><Drop width={10} /></Row>
            </Rows>
        </RibbonGroup>
        <RibbonGroup label="Confidencialidad" width={115} center>
            <BigTool $width={110} $disabled><SensitivityIcon /><span>Confidencialidady</span><Chevron color="#b8b8b8" /></BigTool>
        </RibbonGroup>
        <RibbonGroup label="Complementos" width={104} center>
            <BigTool $width={98}><AddinsIcon /><span>Complementos</span></BigTool>
        </RibbonGroup>
        <RibbonGroup label="" width={60} center>
            <BigTool $width={56}><CopilotIcon id="rb" size={30} h={32} /><span>Copilot</span></BigTool>
        </RibbonGroup>
        <Collapse aria-label="Contraer cinta"><Chevron size={12} width={0.9} /></Collapse>
    </Ribbon>
)

const Sheet = () => (
    <SheetArea>
        <Canvas>
            <Grid>
                <colgroup>
                    {[47, 181, 185, 236, 320, 140].map((w, i) => <col key={i} style={{ width: w }} />)}
                    <col />
                </colgroup>
                <thead>
                    <tr>
                        <Corner />
                        {['A', 'B', 'C', 'D', 'E'].map(c => <ColHead key={c} scope="col" $on={c === 'B'}>{c}</ColHead>)}
                        <ColHead scope="col" $shift={28}>F</ColHead>
                    </tr>
                </thead>
                <tbody>
                    {rows.map(([n, cells]) => (
                        <tr key={n}>
                            <RowHead scope="row" $on={n === 110}>{n}</RowHead>
                            {cells.map((c, i) => (
                                <Cell
                                    key={i}
                                    colSpan={c.span}
                                    $fill={c.fill}
                                    $caption={c.caption}
                                    $center={c.center}
                                    $boxed={c.boxed}
                                    $selected={c.selected}
                                    $flagged={c.flagged}
                                >
                                    {c.text}
                                </Cell>
                            ))}
                        </tr>
                    ))}
                </tbody>
            </Grid>
            <Snippet $top={128} $width={234} $pad="4px 0 0 3px"><code>=B2 - (B2*C2)</code></Snippet>
            <Snippet $top={341} $width={238} $pad="10px 0 0 7px"><code>=B2 - (B2*C2)</code></Snippet>
            <Pointer width="15" height="15" viewBox="0 0 15 15" fill="#fff" stroke="#777">
                <path d="M5.500 1.500h4v4h4v4h-4v4h-4v-4h-4v-4h4z" />
            </Pointer>
        </Canvas>
        <VScroll>
            <Arrow d="M4 1 8 7H0z" />
            <VThumb />
            <Arrow d="M4 7 8 1H0z" />
        </VScroll>
    </SheetArea>
)

const App = () => {
    const [autosave, setAutosave] = useState(false);
    const [zoom, setZoom] = useState(62);

    return (
        <Page>
            <GlobalStyle />
            <TitleBar>
                <QuickAccess>
                    <ExcelIcon />
                    <AutoSave>
                        Autoguardado
                        <Toggle type="checkbox" checked={autosave} onChange={e => setAutosave(e.target.checked)} />
                    </AutoSave>
                    <Tool $width={22} aria-label="Guardar"><SaveIcon /></Tool>
                    <Tool $width={32} aria-label="Deshacer"><UndoIcon color="#333" /></Tool>
                    <Chevron />
                    <Tool $width={30} aria-label="Rehacer"><UndoIcon flip color="#b0b0b0" /></Tool>
                    <Chevron color="#b0b0b0" />
                    <Tool $width={32} aria-label="Personalizar"><Svg w={8} h={8} strokeWidth="1.2"><path d="M0 1h8M1 3.500l3 3 3-3z" /></Svg></Tool>
                    <FileName>Ejercicios de operadores desarrollado.xlsx  -...</FileName>
                </QuickAccess>
                <Search>
                    <Lens color="#555" />
                    <input type="text" placeholder="Buscar" aria-label="Buscar" />
                </Search>
                <WindowButtons>
                    <Avatar>O</Avatar>
                    <WindowButton aria-label="Minimizar"><Svg w={10}><path d="M0 4.500h10" /></Svg></WindowButton>
                    <WindowButton aria-label="Restaurar"><Svg w={10} strokeWidth="1.100"><rect x=".6" y="2.400" width="7" height="7" rx="1.500" /><path d="M3 .6h4.500a2 2 0 0 1 2 2V7" /></Svg></WindowButton>
                    <WindowButton aria-label="Cerrar"><Svg w={10} strokeWidth="1.100"><path d="M0 0l10 10M10 0 0 10" /></Svg></WindowButton>
                </WindowButtons>
            </TitleBar>
            <TabBar>
                <TabList>
                    {tabs.map((t, i) => <Tab key={t} $first={i === 0} $active={t === 'Inicio'}>{t}</Tab>)}
                </TabList>
                <TabAction $width={102}><CommentIcon />Comentarios</TabAction>
                <TabAction $width={97} $primary><ShareIcon />Compartir<Chevron color="#fff" /></TabAction>
            </TabBar>
            <HomeRibbon />
            <FormulaBar>
                <NameBox>
                    <input type="text" defaultValue="B110" aria-label="Cuadro de nombres" />
                    <Chevron size={11} width={0.9} />
                </NameBox>
                <Dots><i /><i /><i /></Dots>
                <FormulaButtons>
                    <button aria-label="Cancelar"><Svg w={12} stroke="#aaa"><path d="M0 0l12 12M12 0 0 12" /></Svg></button>
                    <button aria-label="Introducir"><Svg w={16} h={14} stroke="#aaa"><path d="M1 7l5 5L15 2" /></Svg></button>
                    <Fx>fx</Fx>
                    <Chevron size={11} width={0.8} color="#777" />
                </FormulaButtons>
                <FormulaInput>
                    <input type="text" defaultValue="15000" aria-label="Barra de fórmulas" />
                    <Chevron size={12} width={0.9} />
                </FormulaInput>
            </FormulaBar>
            <Sheet />
            <SheetTabs>
                <Tool $width={32} aria-label="Hoja anterior"><Svg w={8} h={12} stroke="#888"><path d="M6 1.500 2 6l4 4.500" /></Svg></Tool>
                <Tool $width={32} aria-label="Hoja siguiente"><Svg w={8} h={12} stroke="#888"><path d="M2 1.500 6 6l-4 4.500" /></Svg></Tool>
                <SheetTab $active><span>Hoja1</span></SheetTab>
                <SheetTab><span>Hoja2</span></SheetTab>
                <Tool $width={94} aria-label="Nueva hoja"><Svg w={11} stroke="#555"><path d="M5.500 0v11M0 5.500h11" /></Svg></Tool>
                <Dots $end><i /><i /><i /></Dots>
                <HScroll>
                    <Arrow d="M1 4 7 0v8z" />
                    <HThumb />
                    <Arrow d="M7 4 1 0v8z" />
                </HScroll>
            </SheetTabs>
            <StatusBar>
                <Listo>Listo</Listo>
                <MacroIcon />
                <DisplaySettings><DisplayIcon />Configuración de visualización</DisplaySettings>
                <ViewButton $active aria-label="Normal"><Svg w={14} strokeWidth="1.100"><path d="M.6.6h12.800v12.800H.6zM.6 5h12.800M.6 9h12.800M5 .6v12.800M9 .6v12.800" /></Svg></ViewButton>
                <ViewButton aria-label="Diseño de página"><Svg w={14} strokeWidth="1.100"><path d="M.6.6h12.800v12.800H.6zM3.500 3h7v8h-7zM5 5h4M5 7h4M5 9h4" /></Svg></ViewButton>
                <ViewButton aria-label="Saltos de página"><Svg w={14} strokeWidth="1.100"><path d="M.6.6h12.800v12.800H.6zM5 .6v7.400M9 .6v7.400M.6 8H9" /></Svg></ViewButton>
                <Zoom>
                    <Svg w={8}><path d="M0 4.500h8" /></Svg>
                    <input type="range" min="0" max="100" value={zoom} onChange={e => setZoom(e.target.value)} aria-label="Zoom" />
                    <Svg w={8}><path d="M0 4.500h8M4.500 0v8" /></Svg>
                </Zoom>
                <ZoomValue>175%</ZoomValue>
            </StatusBar>
            <Taskbar>
                <button aria-label="El tiempo">
                    <Svg w={30} h={30} stroke="none">
                        <path d="M7 26a5 5 0 0 1 0-10 7 7 0 0 1 13-1 5.500 5.500 0 0 1 1 11z" fill="#a9c6f2" /><path d="M4 24h21c-1 1.500-2 2-4 2H7c-1 0-2-.5-3-2z" fill="#d6e4fb" />
                        <circle cx="21" cy="7" r="8" fill="#f27a86" />
                        <text x="21" y="11" fontSize="10" textAnchor="middle" fill="#222">3</text>
                    </Svg>
                </button>
                <Apps>
                    {taskApps.map(([key, label, running]) => (
                        <AppButton key={key} aria-label={label} $running={running} $active={key === 'excel'}>
                            {taskIcons[key]}
                            <i />
                        </AppButton>
                    ))}
                </Apps>
                <Tray>
                    <button aria-label="Iconos ocultos"><Svg w={12} h={8} strokeWidth="1.500"><path d="M1 7l5-5 5 5" /></Svg></button>
                    <button aria-label="OneDrive"><Svg w={18} h={16}><path d="M5 13a3.500 3.500 0 0 1 0-7 5 5 0 0 1 9 0 3.500 3.500 0 0 1 0 7z" fill="#777" stroke="none" /><path d="M2 1l14 14" stroke="#ddd" strokeWidth="1.300" /></Svg></button>
                    <button aria-label="Micrófono"><Svg w={12} h={16} stroke="#6fd0d8" strokeWidth="1.300"><rect x="3.500" y="1" width="5" height="9" rx="2.500" /><path d="M1 7c0 7 10 7 10 0M6 12.500V16" /></Svg></button>
                    <button aria-label="Wifi"><Svg w={16} h={14} strokeWidth="1.400"><path d="M1 5.500c4-4.500 10-4.500 14 0M3.500 8c2.500-3 6.500-3 9 0M5.700 10.300c1.300-1.400 3.300-1.400 4.600 0" /><circle cx="8" cy="12" r="1" fill="#fff" /></Svg></button>
                    <button aria-label="Volumen"><Svg w={16} h={14} strokeWidth="1.100"><path d="M1 5h2.500L7 2v10L3.500 9H1zM9 5c1 1 1 3 0 4M11 3c2 2 2 6 0 8M13 1.500c3 3 3 8 0 11" /></Svg></button>
                    <button aria-label="Batería"><Svg w={16} h={14} strokeWidth="1.200"><path d="M7 4h7v8H2V7M15.300 6.500v3" /><path d="M3.500 0 1 4.500h2L2 8l3.500-4.500h-2L5 0z" fill="#fff" strokeWidth=".5" /></Svg></button>
                    <Clock>19:05<br />13/11/2025</Clock>
                </Tray>
            </Taskbar>
        </Page>
    )
}

export default App;
